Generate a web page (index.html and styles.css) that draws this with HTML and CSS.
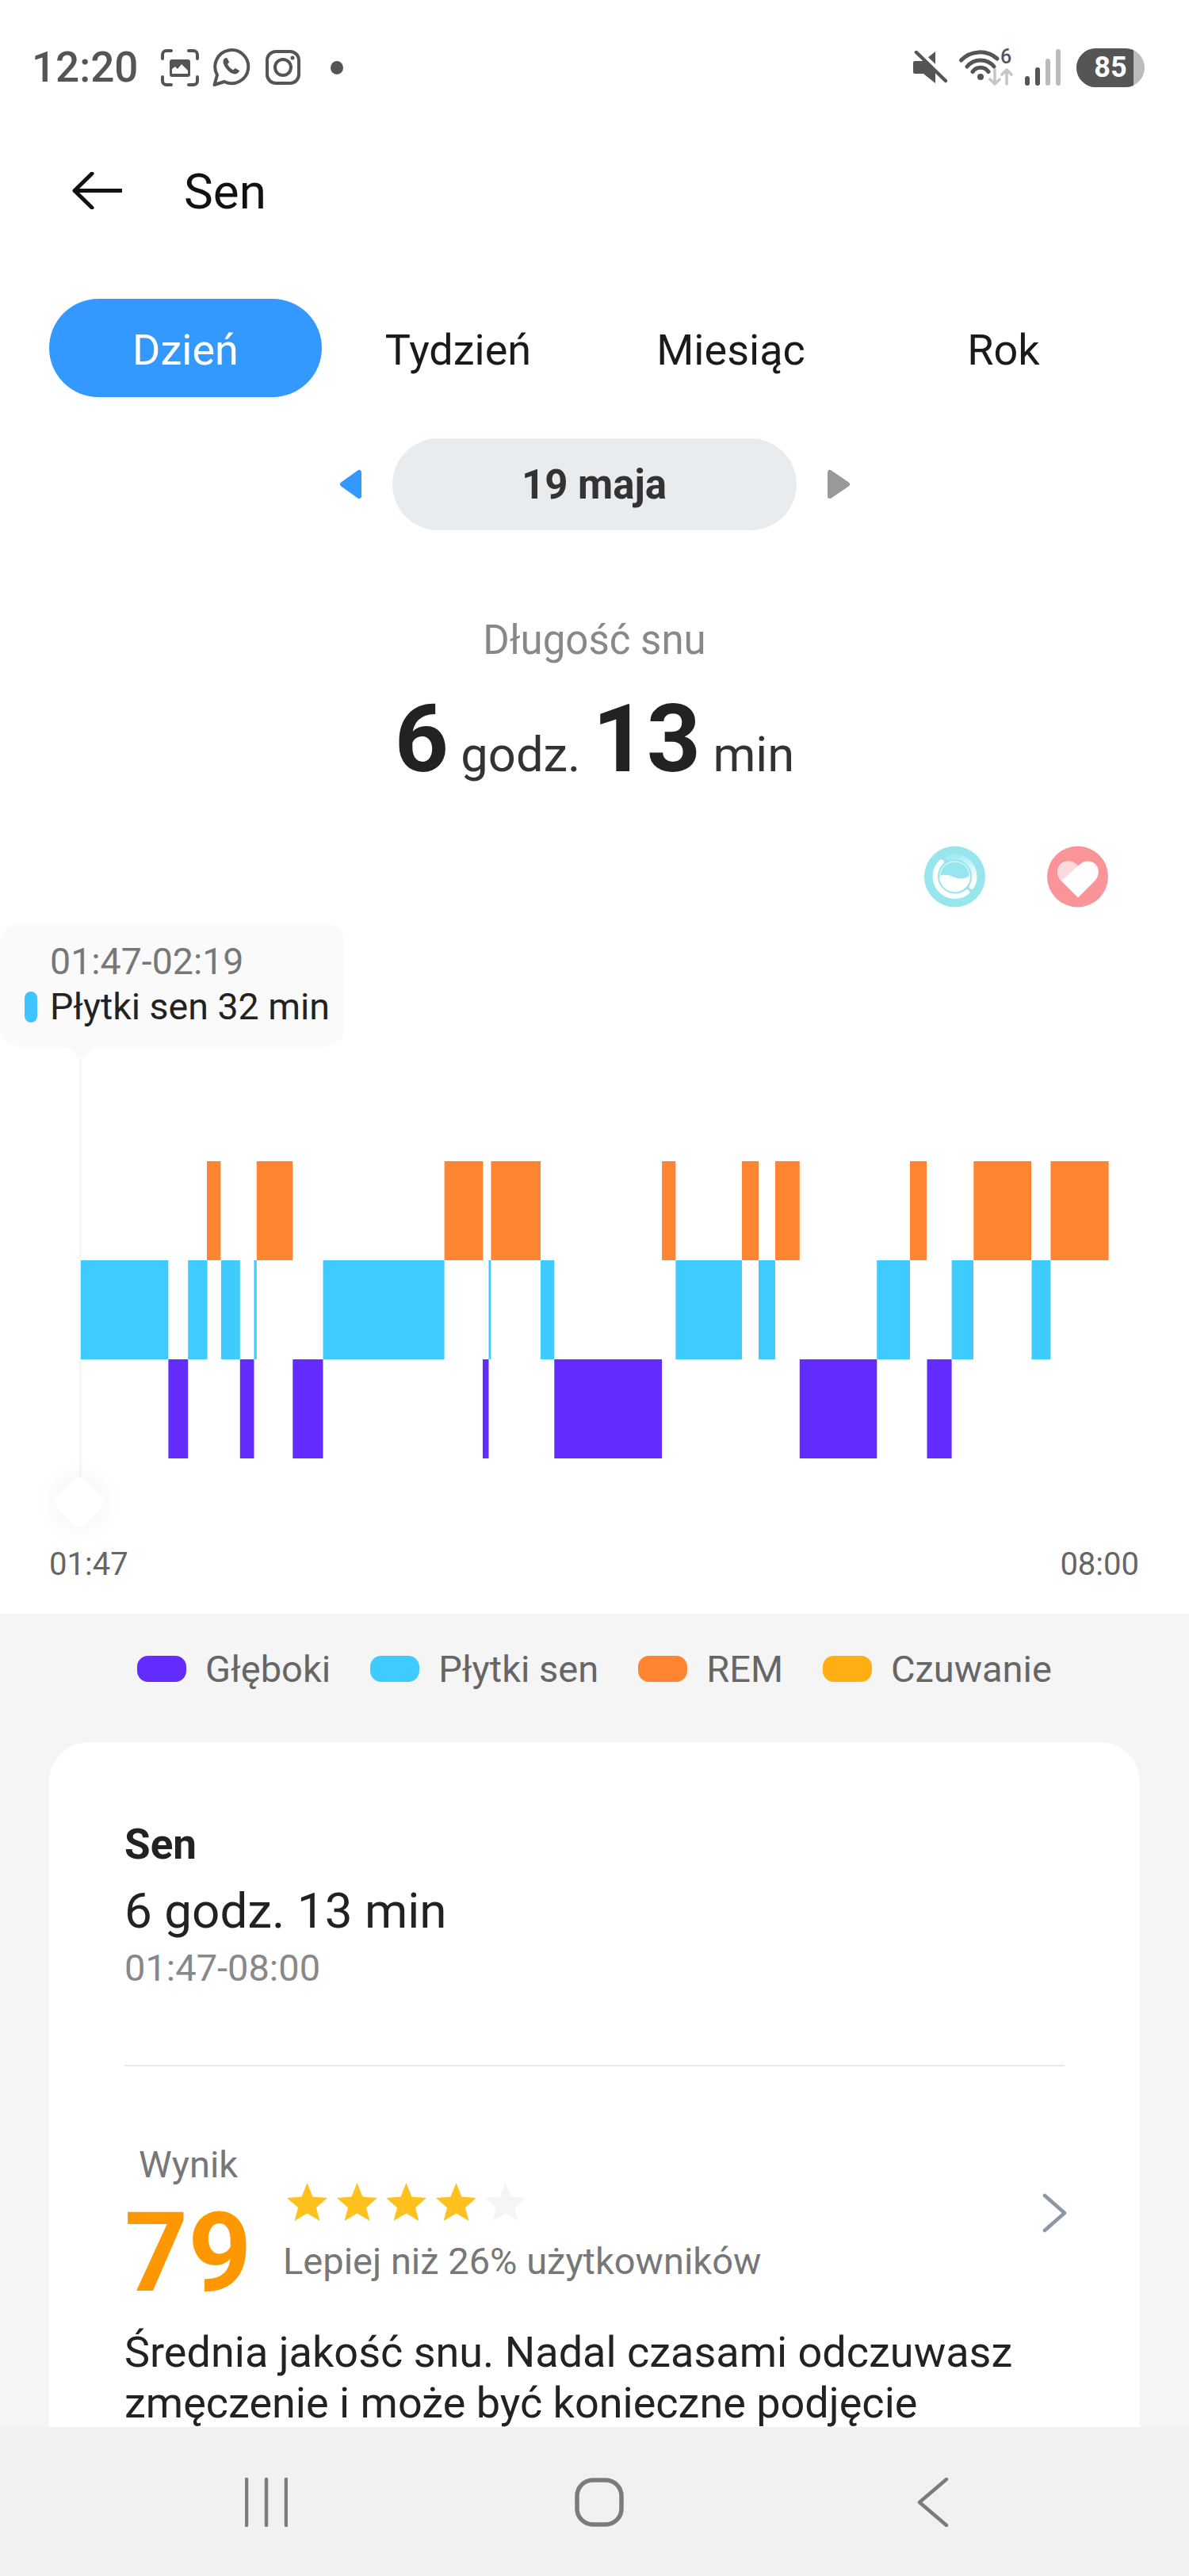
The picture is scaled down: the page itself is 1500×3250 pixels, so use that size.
FILE: index.html
```html
<!DOCTYPE html>
<html lang="pl">
  <head>
    <meta charset="UTF-8" />
    <meta name="viewport" content="width=device-width, initial-scale=1.0" />
    <title>Sen</title>
    <link rel="stylesheet" href="styles.css">
  </head>
  <body>
    <div id="app">
      <div id="main">
        <div class="statusbar">
          <div class="status-left">
            <span class="clock">12:20</span>
            <svg class="ic-shot" width="48" height="47" viewBox="0 0 48 47">
              <path class="stroke-dark" d="M13 2H7a5 5 0 0 0-5 5v5M35 2h6a5 5 0 0 1 5 5v5M13 45H7a5 5 0 0 1-5-5v-5M35 45h6a5 5 0 0 0 5-5v-5" />
              <rect class="fill-dark" x="11" y="13" width="26" height="22" rx="3" />
              <path class="fill-white" d="M14 31v-6l4-3 3 3 5-6 8 8v4z" />
            </svg>
            <svg class="ic-whatsapp" width="49" height="48" viewBox="0 0 49 48">
              <path class="stroke-dark" d="M2.500 46L6 33.500A21 21 0 1 1 15 42Z" />
              <path class="fill-dark" d="M15.500 12.500c-3 2.500-2.500 7 1.500 12.500 4 5.500 9.500 8.500 13.500 7 2-.8 3.500-2.500 3.500-4l-5.500-3-2.200 2.200c-3-1.200-6-4.200-7.300-7.400l2.200-2.300-2.800-5.500z" />
            </svg>
            <svg class="ic-insta" width="44" height="44" viewBox="0 0 44 44">
              <rect class="stroke-dark" x="2" y="2" width="40" height="40" rx="11" />
              <circle class="stroke-dark" cx="22" cy="22" r="10" />
              <circle class="fill-dark" cx="34" cy="10" r="2.500" />
            </svg>
            <span class="status-dot"></span>
          </div>
          <div class="status-right">
            <svg class="ic-mute" width="44" height="42" viewBox="0 0 44 42">
              <path class="fill-dark" d="M3 13h11L29 1v40L14 29H3a2 2 0 0 1-2-2V15a2 2 0 0 1 2-2z" />
              <path class="stroke-white" d="M9 1l37 36" />
              <path class="stroke-mute" d="M5 2l37 36" />
            </svg>
            <svg class="ic-wifi" width="68" height="46" viewBox="0 0 68 46">
              <path class="stroke-wifi" d="M2.500 14A33 33 0 0 1 48 12M10 22A22 22 0 0 1 44 22M17 28.500A12 12 0 0 1 37 28.500" />
              <circle class="fill-dark" cx="27" cy="35" r="4" />
              <text class="wifi-six" x="52" y="18">6</text>
              <path class="stroke-arrow" d="M45 26v18M39 38l6 6 6-6M60 44V26M54 32l6-6 6 6" />
            </svg>
            <div class="signal">
              <span class="bar bar-1"></span>
              <span class="bar bar-2"></span>
              <span class="bar bar-3"></span>
              <span class="bar bar-4"></span>
            </div>
            <div class="battery"><span class="battery-level">85</span></div>
          </div>
        </div>

        <div class="topbar">
          <svg width="63" height="47" viewBox="0 0 63 47">
            <path class="stroke-back" d="M62 23.500H3M25 2L3 23.500 25 45" />
          </svg>
          <span class="title">Sen</span>
        </div>

        <div class="tabs">
          <div class="tab active">Dzień</div>
          <div class="tab">Tydzień</div>
          <div class="tab">Miesiąc</div>
          <div class="tab">Rok</div>
        </div>

        <div class="datepick">
          <svg width="29" height="38" viewBox="0 0 29 38"><path class="arrow-prev" d="M25 4v30L4 19z" /></svg>
          <div class="date-pill">19 maja</div>
          <svg width="30" height="38" viewBox="0 0 30 38"><path class="arrow-next" d="M4 4v30l22-15z" /></svg>
        </div>

        <div class="summary-label">Długość snu</div>
        <div class="summary-value"><span class="big">6</span> godz. <span class="big">13</span> min</div>

        <div class="badges">
          <svg width="77" height="78" viewBox="0 0 77 77">
            <defs>
              <linearGradient id="ringfade" x1="0.2" y1="0" x2="0.6" y2="1">
                <stop offset="0" stop-color="#fff" stop-opacity="0.15" />
                <stop offset="1" stop-color="#fff" stop-opacity="1" />
              </linearGradient>
              <clipPath id="ballclip"><circle cx="38.500" cy="38.500" r="19" /></clipPath>
            </defs>
            <circle class="badge-sleep" cx="38.500" cy="38.500" r="38.500" />
            <path class="ring-solid" d="M21.500 20.100A25 25 0 0 0 54 58" />
            <path class="ring-fade" d="M30 15A25 25 0 0 1 60 51" />
            <circle class="ball-line" cx="38.500" cy="38.500" r="19" />
            <path class="fill-white" clip-path="url(#ballclip)" d="M18 39c6-4 12-3 19 0s14 3 21-2v22H18z" />
          </svg>
          <svg width="77" height="78" viewBox="0 0 77 77">
            <circle class="badge-heart" cx="38.500" cy="38.500" r="38.500" />
            <path class="fill-white" d="M39 65L18 44C9 35 13 19 27 19c5 0 9 3 12 6 3-3 7-6 12-6 14 0 18 16 9 25z" />
            <path class="heart-light" d="M18 44C9 35 13 19 27 19c5 0 9 3 12 6z" />
          </svg>
        </div>

        <div class="chart">
          <svg class="hypno" width="1500" height="800" viewBox="0 0 1500 800">
            <line class="cursor-line" x1="101.500" y1="176" x2="101.500" y2="735" />
            <g class="rem">
              <rect x="261" y="320" width="17.400" height="125" />
              <rect x="323.800" y="320" width="45.500" height="125" />
              <rect x="560.600" y="320" width="48.800" height="125" />
              <rect x="619.400" y="320" width="62.600" height="125" />
              <rect x="835.100" y="320" width="17.300" height="125" />
              <rect x="936" y="320" width="21" height="125" />
              <rect x="978" y="320" width="30.800" height="125" />
              <rect x="1148" y="320" width="21" height="125" />
              <rect x="1228.300" y="320" width="72.700" height="125" />
              <rect x="1325.400" y="320" width="73.200" height="125" />
            </g>
            <g class="light">
              <rect x="101.900" y="445" width="110.500" height="125" />
              <rect x="237.200" y="445" width="24.400" height="125" />
              <rect x="278.900" y="445" width="23.900" height="125" />
              <rect x="320.500" y="445" width="3.300" height="125" />
              <rect x="407.500" y="445" width="153.100" height="125" />
              <rect x="616.500" y="445" width="2.900" height="125" />
              <rect x="682" y="445" width="17.300" height="125" />
              <rect x="852.400" y="445" width="83.600" height="125" />
              <rect x="957" y="445" width="21" height="125" />
              <rect x="1106.300" y="445" width="41.700" height="125" />
              <rect x="1200.600" y="445" width="27.400" height="125" />
              <rect x="1301.500" y="445" width="23.900" height="125" />
            </g>
            <g class="deep">
              <rect x="212.400" y="570" width="24.800" height="125" />
              <rect x="302.800" y="570" width="17.700" height="125" />
              <rect x="369.300" y="570" width="38.200" height="125" />
              <rect x="609" y="570" width="7.500" height="125" />
              <rect x="699.300" y="570" width="135.800" height="125" />
              <rect x="1008.800" y="570" width="97.500" height="125" />
              <rect x="1169.500" y="570" width="31.100" height="125" />
            </g>
            <path class="handle" d="M92 722q8-8 16 0l21 22q6 6 0 12l-21 22q-8 8-16 0l-21-22q-6-6 0-12z" />
          </svg>
          <div class="tooltip">
            <div class="tip-time">01:47-02:19</div>
            <div class="tip-row"><span class="tip-mark"></span>Płytki sen 32 min</div>
          </div>
          <div class="axis">
            <span>01:47</span>
            <span>08:00</span>
          </div>
        </div>

        <div class="legend">
          <div class="legend-item"><span class="swatch sw-deep"></span>Głęboki</div>
          <div class="legend-item"><span class="swatch sw-light"></span>Płytki sen</div>
          <div class="legend-item"><span class="swatch sw-rem"></span>REM</div>
          <div class="legend-item"><span class="swatch sw-awake"></span>Czuwanie</div>
        </div>

        <div class="card">
          <div class="card-title">Sen</div>
          <div class="card-value">6 godz. 13 min</div>
          <div class="card-time">01:47-08:00</div>
          <div class="divider"></div>
          <div class="score">
            <div class="score-left">
              <div class="score-label">Wynik</div>
              <div class="score-num">79</div>
            </div>
            <div class="score-right">
              <div class="stars">
                <svg width="51" height="48" viewBox="0 0 51 48"><path class="star-on" d="M25.500 0l7 17.500 18.500 1.500-14 12.300 4.500 16.700-16-9.500-16 9.500 4.500-16.700L0 19l18.500-1.500z" /></svg>
                <svg width="51" height="48" viewBox="0 0 51 48"><path class="star-on" d="M25.500 0l7 17.500 18.500 1.500-14 12.300 4.500 16.700-16-9.500-16 9.500 4.500-16.700L0 19l18.500-1.500z" /></svg>
                <svg width="51" height="48" viewBox="0 0 51 48"><path class="star-on" d="M25.500 0l7 17.500 18.500 1.500-14 12.300 4.500 16.700-16-9.500-16 9.500 4.500-16.700L0 19l18.500-1.500z" /></svg>
                <svg width="51" height="48" viewBox="0 0 51 48"><path class="star-on" d="M25.500 0l7 17.500 18.500 1.500-14 12.300 4.500 16.700-16-9.500-16 9.500 4.500-16.700L0 19l18.500-1.500z" /></svg>
                <svg width="51" height="48" viewBox="0 0 51 48"><path class="star-off" d="M25.500 0l7 17.500 18.500 1.500-14 12.300 4.500 16.700-16-9.500-16 9.500 4.500-16.700L0 19l18.500-1.500z" /></svg>
              </div>
              <div class="score-note">Lepiej niż 26% użytkowników</div>
            </div>
            <svg class="score-more" width="33" height="50" viewBox="0 0 33 50"><path d="M4 3l25 22L4 47" /></svg>
          </div>
          <p class="score-text">Średnia jakość snu. Nadal czasami odczuwasz zmęczenie i może być konieczne podjęcie</p>
        </div>
      </div>

      <div class="navbar">
        <svg width="54" height="62" viewBox="0 0 54 62"><path class="stroke-nav" d="M2 2v58M27 2v58M52 2v58" /></svg>
        <svg width="62" height="62" viewBox="0 0 62 62"><rect class="stroke-home" x="3" y="3" width="56" height="56" rx="20" /></svg>
        <svg width="40" height="62" viewBox="0 0 40 62"><path class="stroke-nav" d="M37 2L3 31l34 29" /></svg>
      </div>
    </div>
  </body>
</html>
```

FILE: styles.css
```css
body {
  margin: 0;
  font-family: Roboto, "Liberation Sans", sans-serif;
  background-color: #f5f5f5;
  color: #222;
}

#app {
  width: 1500px;
  height: 3250px;
  display: flex;
  flex-direction: column;
  overflow: hidden;
}

#main {
  flex: 1;
  min-height: 0;
  overflow: hidden;
}

.statusbar,
.topbar,
.tabs,
.datepick,
.summary-label,
.summary-value,
.badges,
.chart {
  background-color: #fff;
}

/* status bar */
.statusbar {
  height: 170px;
  padding: 0 56px 0 40px;
  display: flex;
  align-items: center;
  justify-content: space-between;
}

.status-left,
.status-right {
  display: flex;
  align-items: center;
}

.clock {
  width: 136px;
  font-size: 53px;
  font-weight: 500;
  color: #555;
  margin-right: 27px;
}

.ic-whatsapp {
  margin-left: 17px;
}

.ic-insta {
  margin-left: 18px;
}

.status-dot {
  width: 16px;
  height: 17px;
  margin-left: 38px;
  border-radius: 50%;
  background-color: #555;
}

.ic-wifi {
  margin-left: 15px;
  overflow: visible;
}

.signal {
  display: flex;
  align-items: flex-end;
  gap: 7px;
  height: 46px;
  margin-left: 15px;
}

.bar {
  width: 6px;
  border-radius: 3px;
  background-color: #bbb;
}

.bar-1 {
  height: 12px;
  background-color: #555;
}

.bar-2 {
  height: 23px;
  background-color: #555;
}

.bar-3 {
  height: 34px;
}

.bar-4 {
  height: 46px;
}

.battery {
  width: 86px;
  height: 49px;
  margin-left: 20px;
  border-radius: 25px;
  background-color: #bbb;
  overflow: hidden;
}

.battery-level {
  width: 72px;
  height: 49px;
  padding-left: 14px;
  box-sizing: border-box;
  display: flex;
  align-items: center;
  justify-content: center;
  font-size: 36px;
  font-weight: 700;
  color: #fff;
  background-color: #555;
}

.stroke-dark {
  fill: none;
  stroke: #555;
  stroke-width: 4;
  stroke-linecap: round;
  stroke-linejoin: round;
}

.fill-dark {
  fill: #555;
}

.fill-white {
  fill: #fff;
}

.stroke-white {
  fill: none;
  stroke: #fff;
  stroke-width: 5;
}

.stroke-mute {
  fill: none;
  stroke: #555;
  stroke-width: 4.500;
  stroke-linecap: round;
}

.stroke-wifi {
  fill: none;
  stroke: #555;
  stroke-width: 5;
  stroke-linecap: round;
}

.stroke-arrow {
  fill: none;
  stroke: #c6c6c6;
  stroke-width: 3.500;
  stroke-linecap: round;
  stroke-linejoin: round;
}

.wifi-six {
  font-size: 25px;
  font-weight: 500;
  fill: #555;
}

/* title */
.topbar {
  height: 140px;
  padding-left: 91px;
  display: flex;
  align-items: center;
  gap: 78px;
}

.stroke-back {
  fill: none;
  stroke: #111;
  stroke-width: 5;
  stroke-linecap: round;
  stroke-linejoin: round;
}

.title {
  padding-top: 2px;
  font-size: 62px;
  color: #111;
}

/* tabs */
.tabs {
  padding: 67px 62px 0;
  display: grid;
  grid-template-columns: repeat(4, 344px);
}

.tab {
  height: 124px;
  padding-top: 4px;
  box-sizing: border-box;
  display: flex;
  align-items: center;
  justify-content: center;
  font-size: 54px;
  color: #1a1a1a;
}

.tab.active {
  border-radius: 62px;
  color: #fff;
  background-color: #3399ff;
}

.datepick {
  padding-top: 52px;
  display: flex;
  align-items: center;
  justify-content: center;
  gap: 38px;
}

.date-pill {
  width: 510px;
  height: 116px;
  display: flex;
  align-items: center;
  justify-content: center;
  border-radius: 58px;
  font-size: 51px;
  font-weight: 700;
  color: #333;
  background-color: #e9ecef;
}

.arrow-prev {
  fill: #3399ff;
  stroke: #3399ff;
  stroke-width: 6;
  stroke-linejoin: round;
}

.arrow-next {
  fill: #999;
  stroke: #999;
  stroke-width: 6;
  stroke-linejoin: round;
}

/* summary */
.summary-label {
  padding-top: 109px;
  line-height: 60px;
  text-align: center;
  font-size: 51px;
  color: #888;
}

.summary-value {
  padding-top: 30px;
  line-height: 130px;
  text-align: center;
  font-size: 61.500px;
  color: #333;
}

.big {
  font-size: 119px;
  font-weight: 700;
  color: #222;
}

.badges {
  padding: 50px 102px 0 0;
  display: flex;
  justify-content: flex-end;
  gap: 78px;
}

.badges svg {
  display: block;
}

.badge-sleep {
  fill: #97e6ee;
}

.ring-solid {
  fill: none;
  stroke: #fff;
  stroke-width: 6.500;
  stroke-linecap: round;
}

.ring-fade {
  fill: none;
  stroke: url(#ringfade);
  stroke-width: 6.500;
  stroke-linecap: round;
}

.ball-line {
  fill: #97e6ee;
  stroke: #fff;
  stroke-width: 1;
}

.badge-heart {
  fill: #fb9499;
}

.heart-light {
  fill: #fadadd;
}

/* chart */
.chart {
  position: relative;
  padding-bottom: 33px;
}

.hypno {
  display: block;
}

.cursor-line {
  stroke: #f3f3f3;
  stroke-width: 2;
}

.rem {
  fill: #ff8533;
}

.light {
  fill: #40cbff;
}

.deep {
  fill: #622cff;
}

.handle {
  fill: #fff;
  filter: drop-shadow(0 0 14px rgba(0, 0, 0, 0.06));
}

.tooltip {
  position: absolute;
  left: 0;
  top: 20px;
  width: 435px;
  height: 156px;
  box-sizing: border-box;
  padding: 20px 0 0 31px;
  border-radius: 26px;
  background-color: #fafafa;
  font-size: 46.500px;
  line-height: 57px;
}

.tooltip::after {
  content: "";
  position: absolute;
  left: 86px;
  bottom: -16px;
  border-left: 16px solid transparent;
  border-right: 16px solid transparent;
  border-top: 16px solid #fafafa;
}

.tip-time {
  padding-left: 32px;
  color: #777;
}

.tip-row {
  display: flex;
  align-items: center;
  gap: 16px;
  color: #222;
}

.tip-mark {
  width: 16px;
  height: 39px;
  border-radius: 8px;
  background-color: #40c4ff;
}

.axis {
  padding: 0 63px 0 62px;
  display: flex;
  justify-content: space-between;
  font-size: 40px;
  line-height: 58px;
  color: #666;
}

/* legend */
.legend {
  height: 138px;
  margin-bottom: 24px;
  display: flex;
  align-items: center;
  justify-content: center;
  gap: 50px;
  font-size: 47px;
  color: #666;
}

.legend-item {
  display: flex;
  align-items: center;
  gap: 24px;
}

.swatch {
  width: 62px;
  height: 33px;
  border-radius: 14px;
}

.sw-deep {
  background-color: #622cff;
}

.sw-light {
  background-color: #40cbff;
}

.sw-rem {
  background-color: #ff8533;
}

.sw-awake {
  background-color: #ffae14;
}

/* card */
.card {
  margin: 0 62px;
  padding: 99px 95px 60px;
  border-radius: 50px 50px 0 0;
  background-color: #fff;
}

.card-title {
  font-size: 53px;
  font-weight: 700;
  line-height: 60px;
  color: #222;
}

.card-value {
  margin-top: 19px;
  font-size: 62px;
  line-height: 70px;
  color: #222;
}

.card-time {
  margin-top: 9px;
  font-size: 47px;
  line-height: 56px;
  color: #888;
}

.divider {
  height: 2px;
  margin-top: 94px;
  background-color: #e8e8e8;
}

.score {
  margin-top: 96px;
  display: flex;
}

.score-left {
  width: 200px;
}

.score-label {
  padding-left: 18px;
  font-size: 47px;
  line-height: 56px;
  color: #777;
}

.score-num {
  margin-top: 28px;
  font-size: 140px;
  font-weight: 700;
  line-height: 110px;
  color: #ff9800;
}

.score-right {
  padding-top: 51px;
}

.stars {
  padding-left: 5px;
  display: flex;
  gap: 11.500px;
}

.stars svg {
  display: block;
}

.star-on {
  fill: #ffc11e;
}

.star-off {
  fill: #f5f5f5;
}

.score-note {
  margin-top: 23px;
  font-size: 47px;
  line-height: 56px;
  color: #777;
}

.score-more {
  margin: 64px -4px 0 auto;
}

.score-more path {
  fill: none;
  stroke: #8a97a5;
  stroke-width: 4.500;
  stroke-linecap: round;
  stroke-linejoin: round;
}

.score-text {
  margin: 39px 0 0;
  font-size: 54px;
  line-height: 64px;
  color: #222;
}

/* navigation */
.navbar {
  height: 188px;
  box-sizing: border-box;
  flex-shrink: 0;
  display: flex;
  align-items: flex-start;
  background-color: #f1f1f1;
  padding: 64px 0 0 309px;
}

.navbar svg:nth-child(2) {
  margin-left: 362px;
}

.navbar svg:nth-child(3) {
  margin-left: 370px;
}

.stroke-nav {
  fill: none;
  stroke: #7b7b7b;
  stroke-width: 4.500;
  stroke-linecap: round;
  stroke-linejoin: round;
}

.stroke-home {
  fill: none;
  stroke: #7b7b7b;
  stroke-width: 5.500;
}
```
